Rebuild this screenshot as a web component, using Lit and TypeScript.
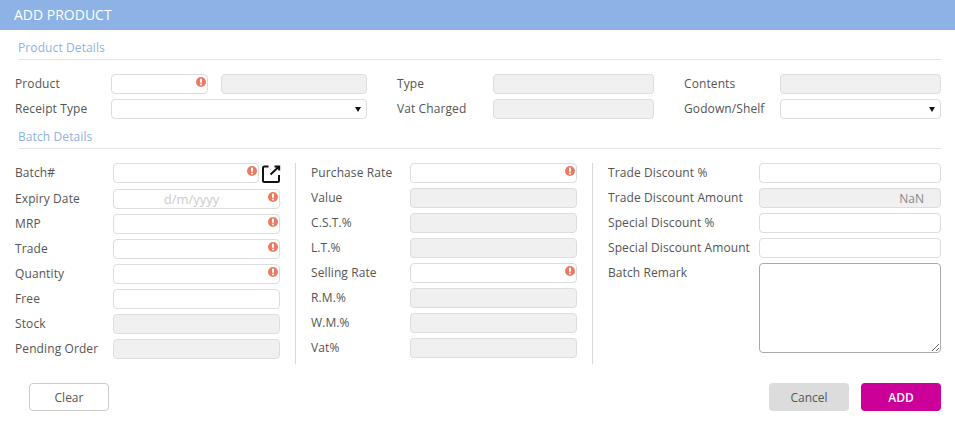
import { LitElement, css, html, nothing } from 'lit';
import { customElement } from 'lit/decorators.js';

type Field = {
  label: string;
  disabled?: boolean;
  error?: boolean;
  value?: string;
  placeholder?: string;
  link?: boolean;
  area?: boolean;
};

const left: Field[] = [
  { label: 'Batch#', error: true, link: true },
  { label: 'Expiry Date', error: true, placeholder: 'd/m/yyyy' },
  { label: 'MRP', error: true },
  { label: 'Trade', error: true },
  { label: 'Quantity', error: true },
  { label: 'Free' },
  { label: 'Stock', disabled: true },
  { label: 'Pending Order', disabled: true },
];

const middle: Field[] = [
  { label: 'Purchase Rate', error: true },
  { label: 'Value', disabled: true },
  { label: 'C.S.T.%', disabled: true },
  { label: 'L.T.%', disabled: true },
  { label: 'Selling Rate', error: true },
  { label: 'R.M.%', disabled: true },
  { label: 'W.M.%', disabled: true },
  { label: 'Vat%', disabled: true },
];

const right: Field[] = [
  { label: 'Trade Discount %' },
  { label: 'Trade Discount Amount', disabled: true, value: 'NaN' },
  { label: 'Special Discount %' },
  { label: 'Special Discount Amount' },
  { label: 'Batch Remark', area: true },
];

const errorIcon = html`<svg class="err" width="10" height="10" viewBox="0 0 10 10">
  <circle cx="5" cy="5" r="5" fill="#ec7a63"></circle>
  <rect x="4" y="1.600" width="2" height="4.200" rx="0.9" fill="#fff"></rect>
  <circle cx="5" cy="7.500" r="1" fill="#fff"></circle>
</svg>`;

const linkIcon = html`<svg class="link" width="20" height="20" viewBox="0 0 20 20" fill="none" stroke="#111" stroke-width="2">
  <path d="M7.500 2.500H3.500A1.500 1.500 0 0 0 2 4V16.500A1.500 1.500 0 0 0 3.500 18H16.500A1.500 1.500 0 0 0 18 16.500V11"></path>
  <path d="M9.500 10.500L18 2.500M13.500 2.500H18.200V6.500"></path>
</svg>`;

const selectBox = html`<div class="box">
  <select></select>
  <span class="arrow"></span>
</div>`;

@customElement('app-root')
export class AppRoot extends LitElement {
  static override styles = css`
    :host {
      display: block;
      width: 955px;
      height: 430px;
      background: #fff;
      font-family: 'Open Sans', sans-serif;
      font-size: 12px;
      letter-spacing: 0.1px;
      color: #555;
      overflow: hidden;
    }

    * {
      box-sizing: border-box;
    }

    .title {
      height: 30px;
      background: #8db2e6;
      color: #fff;
      font-size: 14px;
      letter-spacing: 0;
      line-height: 29px;
      padding-left: 14px;
    }

    .section {
      margin: 7px 14px 0 18px;
      height: 23px;
      line-height: 22px;
      color: #8db2e6;
      border-bottom: 1px solid #e6e6e6;
    }

    .top {
      display: flex;
      gap: 30px;
      margin: 14px 14px 0 15px;
    }

    .group {
      display: grid;
      grid-template-columns: 96px 1fr;
      row-gap: 5px;
      width: 257px;
    }

    .group.wide {
      width: 352px;
    }

    .group label,
    .row label {
      line-height: 20px;
      white-space: nowrap;
    }

    .pair {
      display: flex;
      gap: 13px;
    }

    .pair .box:first-child {
      flex: none;
      width: 97px;
    }

    .batch {
      display: flex;
      margin: 14px 0 0 15px;
    }

    .col {
      display: flex;
      flex-direction: column;
      gap: 5px;
      width: 265px;
      padding-bottom: 5px;
    }

    .col.mid {
      width: 298px;
      margin-left: 15px;
      padding: 0 15px;
      border-left: 1px solid #d9d9d9;
      border-right: 1px solid #d9d9d9;
    }

    .col.last {
      width: 333px;
      margin-left: 15px;
    }

    .row {
      display: flex;
    }

    .row label {
      width: 98px;
      flex: none;
    }

    .mid .row label {
      width: 99px;
    }

    .last .row label {
      width: 151px;
    }

    .box {
      position: relative;
      flex: 1;
      min-width: 0;
      height: 20px;
    }

    input,
    select {
      display: block;
      width: 100%;
      height: 20px;
      margin: 0;
      padding: 0 6px;
      border: 1px solid #ddd;
      border-radius: 4px;
      background: #fff;
      font: inherit;
      color: #888;
      outline: none;
      appearance: none;
    }

    input:disabled {
      background: #f0f0f0;
    }

    input.amount {
      text-align: right;
      padding-right: 16px;
    }

    input.date {
      text-align: center;
      padding-right: 16px;
    }

    input.date::placeholder {
      font-size: 13px;
    }

    input::placeholder {
      color: #ccc;
      opacity: 1;
    }

    textarea {
      display: block;
      width: 182px;
      height: 90px;
      margin: 0;
      border: 1px solid #aaa;
      border-radius: 4px;
      background: #fff;
      outline: none;
    }

    .err {
      position: absolute;
      top: 3px;
      right: 2.500px;
    }

    .arrow {
      position: absolute;
      top: 8px;
      right: 6.500px;
      border-top: 5px solid #111;
      border-left: 3.500px solid transparent;
      border-right: 3.500px solid transparent;
    }

    .with-link {
      display: flex;
      flex: 1;
      gap: 2px;
    }

    .link {
      flex: none;
      margin-top: 1px;
      margin-right: -1px;
    }

    .actions {
      display: flex;
      gap: 12px;
      margin: 19px 14px 0 29px;
    }

    button {
      width: 80px;
      height: 28px;
      border: 1px solid transparent;
      border-radius: 4px;
      font: inherit;
      padding: 0;
    }

    .clear {
      margin-right: auto;
      background: #fff;
      border-color: #ccc;
      color: #555;
    }

    .cancel {
      background: #dcdcdc;
      color: #555;
    }

    .add {
      background: #cc0099;
      color: #fff;
      font-weight: 600;
    }
  `;

  private input(f: Field) {
    const cls = f.value ? 'amount' : f.placeholder ? 'date' : '';
    const box = html`<div class="box">
      <input
        class=${cls}
        ?disabled=${f.disabled}
        .value=${f.value ?? ''}
        placeholder=${f.placeholder ?? ''}
      />
      ${f.error ? errorIcon : nothing}
    </div>`;
    if (f.area) return html`<textarea></textarea>`;
    if (f.link) return html`<div class="with-link">${box}${linkIcon}</div>`;
    return box;
  }

  private rows(fields: Field[]) {
    return fields.map(
      (f) => html`<div class="row"><label>${f.label}</label>${this.input(f)}</div>`
    );
  }

  override render() {
    return html`
      <div class="title">ADD PRODUCT</div>
      <div class="section">Product Details</div>
      <div class="top">
        <div class="group wide">
          <label>Product</label>
          <div class="pair">
            ${this.input({ label: '', error: true })}
            ${this.input({ label: '', disabled: true })}
          </div>
          <label>Receipt Type</label>
          ${selectBox}
        </div>
        <div class="group">
          <label>Type</label>
          ${this.input({ label: '', disabled: true })}
          <label>Vat Charged</label>
          ${this.input({ label: '', disabled: true })}
        </div>
        <div class="group">
          <label>Contents</label>
          ${this.input({ label: '', disabled: true })}
          <label>Godown/Shelf</label>
          ${selectBox}
        </div>
      </div>
      <div class="section">Batch Details</div>
      <div class="batch">
        <div class="col">${this.rows(left)}</div>
        <div class="col mid">${this.rows(middle)}</div>
        <div class="col last">${this.rows(right)}</div>
      </div>
      <div class="actions">
        <button class="clear">Clear</button>
        <button class="cancel">Cancel</button>
        <button class="add">ADD</button>
      </div>
    `;
  }
}
